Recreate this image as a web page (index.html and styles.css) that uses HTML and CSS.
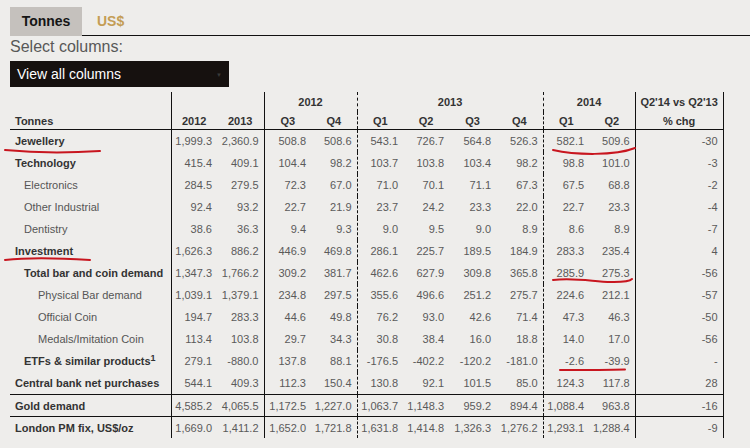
FILE: index.html
```html
<!DOCTYPE html>
<html>
<head>
<meta charset="utf-8">
<title>Gold demand</title>
<link rel="stylesheet" href="styles.css">
</head>
<body>
<div class="page">
  <div class="tabs">
    <div class="tab tab-active">Tonnes</div>
    <div class="tab tab-alt">US$</div>
    <div class="tab-rest"></div>
  </div>
  <div class="select-label">Select columns:</div>
  <div class="dropdown"><span>View all columns</span><span class="arrow">&#9660;</span></div>

  <table class="data">
    <colgroup>
      <col class="c-label">
      <col class="c46"><col class="c47">
      <col class="c47"><col class="c46">
      <col class="c46"><col class="c46"><col class="c47"><col class="c47">
      <col class="c46"><col class="c46">
      <col class="c-chg">
    </colgroup>
    <thead>
      <tr class="hr1">
        <th></th>
        <th class="sl"></th>
        <th></th>
        <th class="sl" colspan="2">2012</th>
        <th class="dl" colspan="4">2013</th>
        <th class="dl" colspan="2">2014</th>
        <th class="sl sr">Q2'14 vs Q2'13</th>
      </tr>
      <tr class="hr2">
        <th class="lab">Tonnes</th>
        <th class="sl">2012</th>
        <th>2013</th>
        <th class="sl">Q3</th>
        <th>Q4</th>
        <th class="dl">Q1</th>
        <th>Q2</th>
        <th>Q3</th>
        <th>Q4</th>
        <th class="dl">Q1</th>
        <th>Q2</th>
        <th class="sl sr">% chg</th>
      </tr>
    </thead>
    <tbody>
      <tr class="b0"><td>Jewellery</td><td>1,999.3</td><td>2,360.9</td><td>508.8</td><td>508.6</td><td>543.1</td><td>726.7</td><td>564.8</td><td>526.3</td><td>582.1</td><td>509.6</td><td>-30</td></tr>
      <tr class="b0"><td>Technology</td><td>415.4</td><td>409.1</td><td>104.4</td><td>98.2</td><td>103.7</td><td>103.8</td><td>103.4</td><td>98.2</td><td>98.8</td><td>101.0</td><td>-3</td></tr>
      <tr class="r1"><td>Electronics</td><td>284.5</td><td>279.5</td><td>72.3</td><td>67.0</td><td>71.0</td><td>70.1</td><td>71.1</td><td>67.3</td><td>67.5</td><td>68.8</td><td>-2</td></tr>
      <tr class="r1"><td>Other Industrial</td><td>92.4</td><td>93.2</td><td>22.7</td><td>21.9</td><td>23.7</td><td>24.2</td><td>23.3</td><td>22.0</td><td>22.7</td><td>23.3</td><td>-4</td></tr>
      <tr class="r1"><td>Dentistry</td><td>38.6</td><td>36.3</td><td>9.4</td><td>9.3</td><td>9.0</td><td>9.5</td><td>9.0</td><td>8.9</td><td>8.6</td><td>8.9</td><td>-7</td></tr>
      <tr class="b0"><td>Investment</td><td>1,626.3</td><td>886.2</td><td>446.9</td><td>469.8</td><td>286.1</td><td>225.7</td><td>189.5</td><td>184.9</td><td>283.3</td><td>235.4</td><td>4</td></tr>
      <tr class="b1"><td>Total bar and coin demand</td><td>1,347.3</td><td>1,766.2</td><td>309.2</td><td>381.7</td><td>462.6</td><td>627.9</td><td>309.8</td><td>365.8</td><td>285.9</td><td>275.3</td><td>-56</td></tr>
      <tr class="r2"><td>Physical Bar demand</td><td>1,039.1</td><td>1,379.1</td><td>234.8</td><td>297.5</td><td>355.6</td><td>496.6</td><td>251.2</td><td>275.7</td><td>224.6</td><td>212.1</td><td>-57</td></tr>
      <tr class="r2"><td>Official Coin</td><td>194.7</td><td>283.3</td><td>44.6</td><td>49.8</td><td>76.2</td><td>93.0</td><td>42.6</td><td>71.4</td><td>47.3</td><td>46.3</td><td>-50</td></tr>
      <tr class="r2"><td>Medals/Imitation Coin</td><td>113.4</td><td>103.8</td><td>29.7</td><td>34.3</td><td>30.8</td><td>38.4</td><td>16.0</td><td>18.8</td><td>14.0</td><td>17.0</td><td>-56</td></tr>
      <tr class="b1"><td>ETFs &amp; similar products<sup>1</sup></td><td>279.1</td><td>-880.0</td><td>137.8</td><td>88.1</td><td>-176.5</td><td>-402.2</td><td>-120.2</td><td>-181.0</td><td>-2.6</td><td>-39.9</td><td>-</td></tr>
      <tr class="b0"><td>Central bank net purchases</td><td>544.1</td><td>409.3</td><td>112.3</td><td>150.4</td><td>130.8</td><td>92.1</td><td>101.5</td><td>85.0</td><td>124.3</td><td>117.8</td><td>28</td></tr>
      <tr class="b0 sep"><td>Gold demand</td><td>4,585.2</td><td>4,065.5</td><td>1,172.5</td><td>1,227.0</td><td>1,063.7</td><td>1,148.3</td><td>959.2</td><td>894.4</td><td>1,088.4</td><td>963.8</td><td>-16</td></tr>
      <tr class="b0 sep"><td>London PM fix, US$/oz</td><td>1,669.0</td><td>1,411.2</td><td>1,652.0</td><td>1,721.8</td><td>1,631.8</td><td>1,414.8</td><td>1,326.3</td><td>1,276.2</td><td>1,293.1</td><td>1,288.4</td><td>-9</td></tr>
    </tbody>
  </table>

  <svg class="marks" width="750" height="448" viewBox="0 0 750 448" aria-hidden="true">
    <path d="M5 150 C35 153 70 153 100 151"/>
    <path d="M5 260 C30 257 60 258 90 260"/>
    <path d="M553 150 C575 155 615 156 635 148"/>
    <path d="M553 280 C578 277 598 283 614 282 C624 282 630 281 632 279"/>
    <path d="M560 370 C585 370 605 370 625 369.5"/>
  </svg>
</div>
</body>
</html>
```

FILE: styles.css
```css
html, body {
  margin: 0;
  padding: 0;
  background: #eeedeb;
}
body {
  width: 750px;
  height: 448px;
  overflow: hidden;
  font-family: "Liberation Sans", Arial, sans-serif;
}
.page {
  position: relative;
  width: 750px;
  height: 448px;
  padding: 7px 0 0 10px;
  box-sizing: border-box;
}
.tabs {
  display: flex;
  height: 29px;
}
.tab {
  font-size: 14px;
  font-weight: bold;
  line-height: 29px;
}
.tab-active {
  width: 72px;
  text-align: center;
  background: #c5c1bd;
  color: #151515;
}
.tab-alt {
  padding: 0 15px;
  color: #c49d55;
  border-bottom: 1px solid #111;
  line-height: 28px;
}
.tab-rest {
  flex: 1;
  border-bottom: 1px solid #111;
}
.select-label {
  margin-top: 1px;
  font-size: 16px;
  line-height: 20px;
  color: #585858;
}
.dropdown {
  margin-top: 4px;
  width: 219px;
  height: 26px;
  background: #16110f;
  color: #fff;
  font-size: 14px;
  line-height: 26px;
  padding-left: 7px;
  box-sizing: border-box;
  display: flex;
  justify-content: space-between;
}
.dropdown .arrow {
  font-size: 6px;
  color: #3a3a3a;
  padding-right: 7px;
  line-height: 28px;
}
.data {
  margin-top: 5px;
  border-collapse: collapse;
  table-layout: fixed;
  width: 713px;
  font-size: 11px;
}
.c-label { width: 161px; }
.c46 { width: 46px; }
.c47 { width: 47px; }
.c-chg { width: 88px; }

.data th {
  font-weight: bold;
  color: #333;
  text-align: center;
  padding: 0;
  white-space: nowrap;
}
.hr1 th { height: 20px; }
.hr2 th { height: 17px; border-bottom: 1px solid #111; vertical-align: middle; }
.data th.lab { text-align: left; padding-left: 5px; }
.data .sl { border-left: 1px solid #111; }
.data .dl { border-left: 1px dashed #111; }
.data .sr { border-right: 1px solid #111; }

.data td {
  height: 22px;
  padding: 0 5px 0 0;
  text-align: right;
  color: #5a5a5a;
  white-space: nowrap;
  vertical-align: middle;
}
.data td:first-child {
  text-align: left;
  padding-left: 5px;
}
.data td:nth-child(2),
.data td:nth-child(4),
.data td:nth-child(12) { border-left: 1px solid #111; }
.data td:nth-child(6),
.data td:nth-child(10) { border-left: 1px dashed #111; }
.data td:nth-child(12) { border-right: 1px solid #111; }
.data tr.sep td { border-top: 1px solid #111; height: 21px; }

.b0 td:first-child { font-weight: bold; color: #333; }
.b1 td:first-child { font-weight: bold; color: #333; padding-left: 14px; }
.r1 td:first-child { color: #555; padding-left: 14px; }
.r2 td:first-child { color: #555; padding-left: 28px; }

.data sup {
  font-size: 9px;
  line-height: 0;
  vertical-align: 4px;
}

.marks {
  position: absolute;
  top: 0;
  left: 0;
  pointer-events: none;
}
.marks path {
  fill: none;
  stroke: #c8161f;
  stroke-width: 2;
  stroke-linecap: round;
}
```
